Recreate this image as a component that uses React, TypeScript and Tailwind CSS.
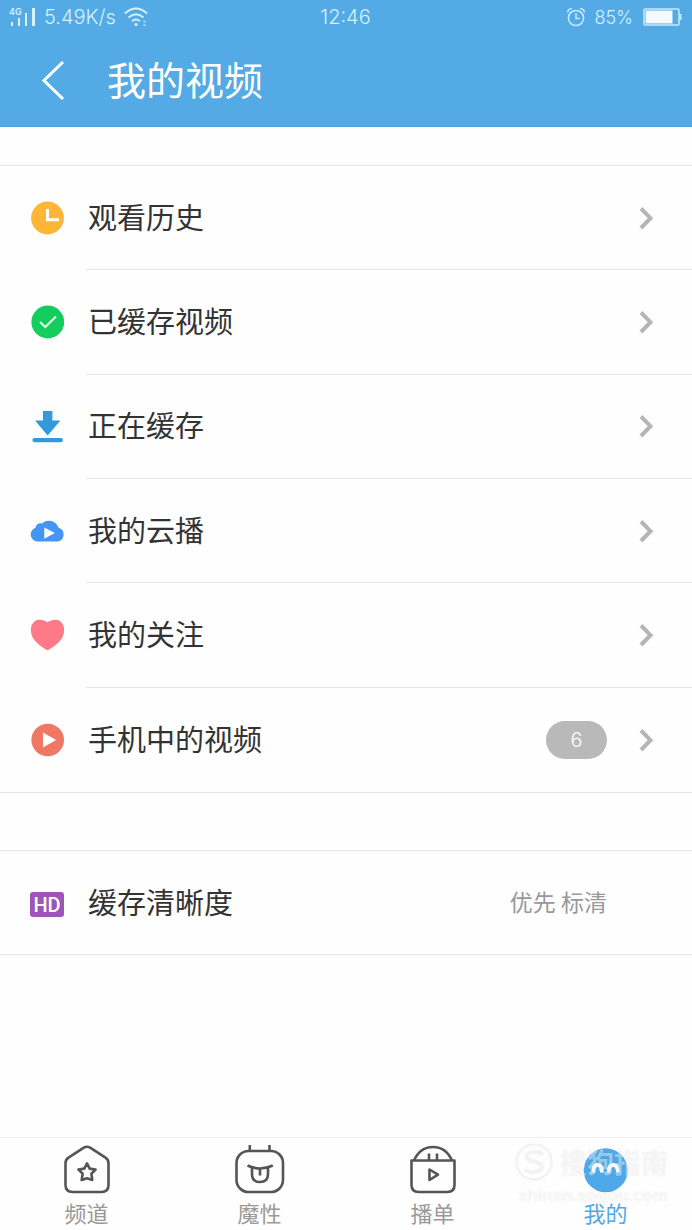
import React, { useState } from 'react';

interface MenuItem {
  label: string;
  icon: React.ReactNode;
  badge?: number;
}

interface TabItem {
  id: string;
  label: string;
  icon: React.ReactNode;
}

const MENU_ITEMS: MenuItem[] = [
  {
    label: '观看历史',
    icon: (
      <svg viewBox="0 0 34 34" className="w-[34px] h-[34px]">
        <circle cx="17.5" cy="17" r="16.4" fill="#ffb535" />
        <path d="M17.5 8v10.800h11.500" fill="none" stroke="#fff" strokeWidth="3" />
      </svg>
    ),
  },
  {
    label: '已缓存视频',
    icon: (
      <svg viewBox="0 0 34 34" className="w-[34px] h-[34px]">
        <circle cx="17.8" cy="17" r="16.4" fill="#13ce5e" />
        <path d="M10 17l5.3 5L26 11.5" fill="none" stroke="#e4ffe9" strokeWidth="2" />
      </svg>
    ),
  },
  {
    label: '正在缓存',
    icon: (
      <svg viewBox="0 0 34 34" className="w-[34px] h-[34px]">
        <path d="M13 1h9.4v9.600h8L17.7 25.400 5 10.600h8z" fill="#3399dd" />
        <rect x="2.4" y="28" width="30.6" height="4.2" rx="2.1" fill="#3399dd" />
      </svg>
    ),
  },
  {
    label: '我的云播',
    icon: (
      <svg viewBox="0 0 34 34" className="w-[34px] h-[34px]">
        <path
          d="M8.500 27.400A7 7 0 0 1 5.500 13.800C6 10.300 9 8.700 12 9.600A10 10 0 0 1 28.500 13.800A7 7 0 0 1 28 27.400z"
          fill="#4397f3"
        />
        <path d="M14.3 13.500v11.300L24.800 19.100z" fill="#fff" />
      </svg>
    ),
  },
  {
    label: '我的关注',
    icon: (
      <svg viewBox="0 0 34 34" className="w-[34px] h-[34px]">
        <path
          d="M17.5 4.200C21 1.500 27 .8 30.200 3.300C34.500 6.500 35.200 13 32.800 18.500C30 24.500 23 29.500 17.500 32.300C12 29.500 5 24.500 2.200 18.500C-.2 13 .5 6.500 4.800 3.300C8 .8 14 1.500 17.500 4.200z"
          fill="#ff7a88"
        />
      </svg>
    ),
  },
  {
    label: '手机中的视频',
    badge: 6,
    icon: (
      <svg viewBox="0 0 34 34" className="w-[34px] h-[34px]">
        <circle cx="17.7" cy="17" r="16.3" fill="#ef7864" />
        <path d="M13 9.600v14.800L26 17z" fill="#fff" />
      </svg>
    ),
  },
];

const TABS: TabItem[] = [
  {
    id: 'channel',
    label: '频道',
    icon: (
      <svg viewBox="0 0 52 50" className="w-[52px] h-[50px]" fill="none" stroke="#555" strokeWidth="2.6" strokeLinejoin="round">
        <path d="M22.5 3.800q3.500-2 7 0L44.500 13.600q3 2 3 5.500V41q0 7-7 7H11.500q-7 0-7-7V19.100q0-3.500 3-5.500z" />
        <path d="M26 19.300l2.700 5.300 5.900.9-4.200 4.200.9 6.300-5.300-1.700-5.300 1.700.9-6.300-4.200-4.200 5.900-.9z" />
      </svg>
    ),
  },
  {
    id: 'magic',
    label: '魔性',
    icon: (
      <svg viewBox="0 0 52 50" className="w-[52px] h-[50px]" fill="none" stroke="#555" strokeWidth="2.6">
        <rect x="2.5" y="7" width="46.5" height="41" rx="12" />
        <path d="M15.8 1v6M35.500 1v6" />
        <path d="M13.5 21.500Q26 27.500 38.800 21.500" />
        <path d="M18 24v6q0 8 8 8t8-8v-6M26 25v6.500" />
      </svg>
    ),
  },
  {
    id: 'playlist',
    label: '播单',
    icon: (
      <svg viewBox="0 0 52 50" className="w-[52px] h-[50px]" fill="none" stroke="#555" strokeWidth="2.6" strokeLinejoin="round">
        <path d="M4.5 16.500h43v24.500q0 7-7 7h-29q-7 0-7-7z" />
        <path d="M7 16.500C11 7.500 18 3 26 3s15 4.500 19 13.500" />
        <path d="M22 9.500v7M30 9.500v7M22.500 25.500v10.500l8.500-5.300z" />
      </svg>
    ),
  },
  {
    id: 'mine',
    label: '我的',
    icon: (
      <svg viewBox="0 0 52 50" className="w-[52px] h-[50px]">
        <circle cx="25.7" cy="26.3" r="22" fill="#4da9e8" />
        <path
          d="M13 28.500q0-7.500 4.500-7.500t4.500 7.500M28.500 28.500q0-7.500 4.700-7.500t4.700 7.500"
          fill="none"
          stroke="#fff"
          strokeWidth="3.8"
        />
      </svg>
    ),
  },
];

function StatusBar() {
  return (
    <div className="grid grid-cols-3 items-center h-[34px] pl-[9px] pr-[10px] font-['Inter',sans-serif] font-light text-[20px] text-[#d6f1ff]">
      <div className="flex items-center">
        <svg viewBox="0 0 27 20" className="w-[27px] h-5" fill="#d6f1ff">
          <text x="0" y="8" fontSize="9" fontWeight="600">4G</text>
          <rect x="2" y="15" width="2" height="4" />
          <rect x="9" y="11" width="2" height="8" />
          <rect x="16" y="6" width="2" height="13" />
          <rect x="23" y="1" width="3" height="18" />
        </svg>
        <span className="ml-2">5.49K/s</span>
        <svg viewBox="0 0 24 20" className="w-6 h-5 ml-2" fill="none" stroke="#d6f1ff" strokeWidth="1.8">
          <path d="M.8 6.500Q12-3.500 23.200 6.500M4.500 10.500q7.500-6.500 15 0M8 14.200q4-3.400 8 0" />
          <circle cx="12" cy="17.5" r="1.6" fill="#d6f1ff" stroke="none" />
          <circle cx="20.5" cy="14.5" r="1.3" fill="#8fd6ff" stroke="none" />
          <circle cx="20.5" cy="18" r="1.3" fill="#8fd6ff" stroke="none" />
        </svg>
      </div>
      <span className="text-center">12:46</span>
      <div className="flex items-center justify-end">
        <svg viewBox="0 0 20 20" className="w-5 h-5" fill="none" stroke="#c5ecff" strokeWidth="1.5">
          <circle cx="10" cy="11" r="7.6" />
          <path d="M10 6v5.500h4M1.500 5.500q.5-3.500 4.500-4M18.500 5.500q-.5-3.500-4.500-4" />
        </svg>
        <span className="ml-2 text-[18px]">85%</span>
        <svg viewBox="0 0 39 18" className="w-[39px] h-[18px] ml-2.5">
          <rect x="1" y="1" width="35" height="16" rx="1" fill="none" stroke="#c5ecff" strokeWidth="1.5" />
          <rect x="2.5" y="2.5" width="27" height="13" fill="#f2f9ff" />
          <rect x="36.5" y="6" width="2" height="6" fill="#c5ecff" />
        </svg>
      </div>
    </div>
  );
}

function MenuRow({ item, last }: { item: MenuItem; last: boolean }) {
  return (
    <li className="flex">
      <button type="button" className="flex flex-1 items-stretch pl-[30px] text-left">
        <span className="flex items-center w-14 shrink-0">{item.icon}</span>
        <span className={`flex flex-1 items-center pl-[2px] pr-[38px] ${last ? '' : 'border-b border-[#e6e6e6]'}`}>
          <span className="flex-1 text-[29px] leading-8 pb-1 text-[#333]">{item.label}</span>
          {item.badge !== undefined && (
            <span className="flex items-center justify-center w-[61px] h-[38px] mr-8 rounded-full bg-[#b9b9b9] text-white text-[20px] font-light font-['Inter',sans-serif]">
              {item.badge}
            </span>
          )}
          <svg viewBox="0 0 15 24" className="w-[15px] h-6" fill="none" stroke="#b5b5b5" strokeWidth="4">
            <path d="M2 2.500L11.500 12.200L2 22" />
          </svg>
        </span>
      </button>
    </li>
  );
}

function Watermark() {
  return (
    <div className="absolute right-6 top-0 flex flex-col items-end pointer-events-none text-white/45 font-bold [text-shadow:0_0_2px_#00000012]">
      <div className="flex items-center gap-1.5 h-[48px]">
        <svg viewBox="0 0 40 40" className="w-10 h-10" fill="none" stroke="#f3f3f3">
          <circle cx="20" cy="20" r="17.5" strokeWidth="2.5" />
          <path d="M29 12.500C25 9 13 9 12.500 14.500C12 20 28 18.500 28 25C27.500 31 15 31.500 11 27.500" strokeWidth="4" />
        </svg>
        <span className="text-[27px] leading-8">搜狗指南</span>
      </div>
      <p className="text-[17px] leading-5 font-['Liberation_Sans',sans-serif]">zhinan.sogou.com</p>
    </div>
  );
}

export default function App() {
  const [activeTab, setActiveTab] = useState('mine');

  return (
    <div className="flex flex-col min-h-screen bg-[#fefefe] font-['Noto_Sans_CJK_SC',sans-serif]">
      <header className="bg-[#53aae4] border-b border-[#48a0dc]">
        <StatusBar />
        <div className="flex items-center h-[92px] pl-10">
          <button type="button" aria-label="返回">
            <svg viewBox="0 0 26 40" className="w-[26px] h-10" fill="none" stroke="#fff" strokeWidth="3">
              <path d="M23 2L4 20.500L23 39" />
            </svg>
          </button>
          <h1 className="ml-[41px] pb-1 text-[39px] leading-10 text-white">我的视频</h1>
        </div>
      </header>

      <main className="flex-1">
        {/* Video list */}
        <ul className="grid auto-rows-fr min-h-[628px] mt-[38px] border-y border-[#e6e6e6]">
          {MENU_ITEMS.map((item, idx) => (
            <MenuRow key={item.label} item={item} last={idx === MENU_ITEMS.length - 1} />
          ))}
        </ul>

        {/* Cache quality */}
        <button
          type="button"
          className="flex items-center w-full h-[105px] mt-[57px] pl-[30px] pr-[85px] border-y border-[#e6e6e6] text-left"
        >
          <span className="flex items-center justify-center w-[34px] h-[25px] mt-1 rounded-[3px] bg-[#9d56b7] text-white text-[20px] leading-6 font-medium font-['Roboto',sans-serif]">
            HD
          </span>
          <span className="flex-1 ml-6 pb-1 text-[29px] leading-8 text-[#333]">缓存清晰度</span>
          <span className="pb-1 text-[23px] leading-8 text-[#999]">优先 标清</span>
        </button>
      </main>

      {/* Bottom tabs */}
      <nav className="relative grid grid-cols-4 border-t border-[#efefef]">
        {TABS.map(tab => (
          <button
            key={tab.id}
            type="button"
            onClick={() => setActiveTab(tab.id)}
            className="flex flex-col items-center h-[92px] pt-1.5"
          >
            {tab.icon}
            <span className={`mt-1 text-[22px] leading-7 ${activeTab === tab.id ? 'text-[#4da9e8]' : 'text-[#999]'}`}>
              {tab.label}
            </span>
          </button>
        ))}
        <Watermark />
      </nav>
    </div>
  );
}
